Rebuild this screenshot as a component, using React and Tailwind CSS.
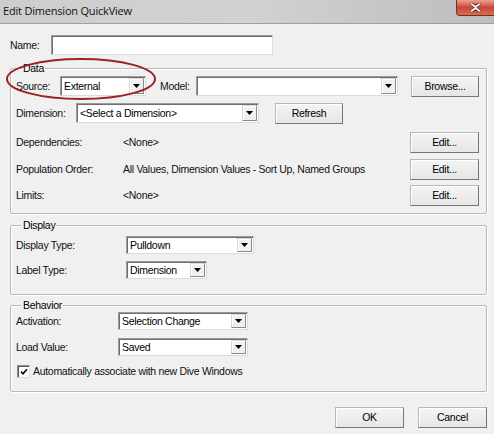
import React from "react";

const font = { fontFamily: '"Liberation Sans", Arial, sans-serif' };

function Btn({ w = "w-[68px]", h = "h-[21px]", children, className = "" }) {
  return (
    <div
      className={`${w} ${h} ${className} flex items-center justify-center shrink-0 bg-gradient-to-b from-[#f4f4f4] to-[#e6e6e6] border border-[#b8b8b8] border-b-[#767676] border-r-[#767676] shadow-[inset_1px_1px_0_#ffffff] text-black`}
    >
      {children}
    </div>
  );
}

function Arrow() {
  return (
    <div className="w-[15px] self-stretch my-[1px] mr-[1px] flex items-center justify-center bg-[#f0f0f0] border border-[#d8d8d8] border-b-[#8a8a8a] border-r-[#8a8a8a] shadow-[inset_1px_1px_0_#ffffff]">
      <svg width="7" height="4" viewBox="0 0 7 4">
        <path d="M0 0h7L3.5 4z" fill="#000" />
      </svg>
    </div>
  );
}

function Combo({ w, h = "h-[20px]", value = "" }) {
  return (
    <div
      className={`${w} ${h} shrink-0 flex items-stretch bg-white border border-[#9a9a9a] border-b-[#dcdcdc] border-r-[#dcdcdc] shadow-[inset_1px_1px_0_#6f6f6f]`}
    >
      <div className="flex-1 flex items-center pl-[3px] text-black truncate">
        {value}
      </div>
      <Arrow />
    </div>
  );
}

function Group({ title, className = "", children }) {
  return (
    <fieldset
      className={`${className} border border-[#b9b9b9] rounded-[2px] shadow-[inset_1px_1px_0_#ffffff,1px_1px_0_#ffffff] pl-[5px] pr-[7px]`}
    >
      <legend className="ml-[6px] px-[1px] leading-[13px] text-black">
        {title}
      </legend>
      {children}
    </fieldset>
  );
}

export default function App() {
  return (
    <div
      className="w-[494px] h-[434px] relative overflow-hidden bg-[#f0f0f0] flex flex-col text-[10.5px] tracking-[-0.3px] leading-[13px] text-[#111]"
      style={font}
    >
      {/* title bar */}
      <div className="h-[24px] shrink-0 flex items-center bg-gradient-to-r from-[#cdcdcd] via-[#d2d2d2] to-[#bdbdbd] border-b border-[#9f9f9f] relative">
        <span
          className="pl-[3px] pb-[2px] text-[11px] tracking-[-0.2px] text-[#111]"
          style={{ fontFamily: '"Open Sans", "Noto Sans", sans-serif' }}
        >
          Edit Dimension QuickView
        </span>
        <div className="absolute right-0 top-0 w-[38px] h-[16px] rounded-bl-[4px] bg-gradient-to-b from-[#e8a08e] via-[#c8463a] to-[#d0704e] border border-[#7a2a20] border-t-0 border-r-0 flex items-center justify-center">
          <svg width="11" height="9" viewBox="0 0 11 9">
            <path
              d="M1 0.5l4.5 3 4.5-3M1 8.5l4.5-3 4.5 3"
              stroke="#4a2020"
              strokeWidth="3.2"
              fill="none"
            />
            <path
              d="M1.2 0.8l4.3 3.2 4.3-3.2M1.2 8.2l4.3-3.2 4.3 3.2"
              stroke="#ffffff"
              strokeWidth="1.8"
              fill="none"
            />
          </svg>
        </div>
      </div>

      <div className="flex-1 flex flex-col pl-[10px] pr-[7px]">
        {/* name */}
        <div className="mt-[11px] flex items-center h-[20px]">
          <span className="w-[41px]">Name:</span>
          <div className="w-[222px] h-[20px] bg-white border border-[#9a9a9a] border-b-[#dcdcdc] border-r-[#dcdcdc] shadow-[inset_1px_1px_0_#6f6f6f]" />
        </div>

        {/* data */}
        <Group title="Data" className="mt-[7px] pb-[7px]">
          <div className="flex items-center h-[22px]">
            <span className="w-[44px]">Source:</span>
            <Combo w="w-[86px]" value="External" />
            <span className="w-[36px] ml-[14px]">Model:</span>
            <Combo w="w-[202px]" />
            <Btn className="ml-[13px]">Browse...</Btn>
          </div>
          <div className="flex items-center h-[22px] mt-[5px]">
            <span className="w-[60px]">Dimension:</span>
            <Combo w="w-[183px]" value="<Select a Dimension>" />
            <Btn className="ml-[16px]">Refresh</Btn>
          </div>
          <div className="flex items-center h-[22px] mt-[7px]">
            <span className="w-[107px]">Dependencies:</span>
            <span className="flex-1">&lt;None&gt;</span>
            <Btn w="w-[69px]">Edit...</Btn>
          </div>
          <div className="flex items-center h-[22px] mt-[5px]">
            <span className="w-[107px]">Population Order:</span>
            <span className="flex-1">
              All Values, Dimension Values - Sort Up, Named Groups
            </span>
            <Btn w="w-[69px]">Edit...</Btn>
          </div>
          <div className="flex items-center h-[22px] mt-[4px]">
            <span className="w-[107px]">Limits:</span>
            <span className="flex-1">&lt;None&gt;</span>
            <Btn w="w-[69px]">Edit...</Btn>
          </div>
        </Group>

        {/* display */}
        <Group title="Display" className="mt-[5px] pt-[4px] pb-[15px]">
          <div className="flex items-center h-[18px]">
            <span className="w-[110px]">Display Type:</span>
            <Combo w="w-[128px]" h="h-[18px]" value="Pulldown" />
          </div>
          <div className="flex items-center h-[18px] mt-[7px]">
            <span className="w-[110px]">Label Type:</span>
            <Combo w="w-[81px]" h="h-[18px]" value="Dimension" />
          </div>
        </Group>

        {/* behavior */}
        <Group title="Behavior" className="mt-[4px] pb-[13px]">
          <div className="flex items-center h-[18px]">
            <span className="w-[102px]">Activation:</span>
            <Combo w="w-[130px]" h="h-[18px]" value="Selection Change" />
          </div>
          <div className="flex items-center h-[18px] mt-[8px]">
            <span className="w-[102px]">Load Value:</span>
            <Combo w="w-[130px]" h="h-[18px]" value="Saved" />
          </div>
          <div className="flex items-center mt-[9px] h-[13px] pl-[1px]">
            <div className="w-[13px] h-[13px] bg-white border border-[#8f8f8f] border-b-[#dcdcdc] border-r-[#dcdcdc] shadow-[inset_1px_1px_0_#5a5a5a] flex items-center justify-center">
              <svg width="8" height="8" viewBox="0 0 8 8">
                <path d="M1 3.5l2 2.2L7 1.2" stroke="#000" strokeWidth="1.6" fill="none" />
              </svg>
            </div>
            <span className="ml-[3px]">Automatically associate with new Dive Windows</span>
          </div>
        </Group>

        {/* buttons */}
        <div className="mt-[15px] flex justify-end gap-[14px]">
          <Btn w="w-[69px]">OK</Btn>
          <Btn w="w-[69px]">Cancel</Btn>
        </div>
      </div>

      {/* red annotation ellipse */}
      <svg
        className="absolute left-0 top-0 pointer-events-none"
        width="494"
        height="434"
        viewBox="0 0 494 434"
      >
        <ellipse cx="81" cy="79" rx="74" ry="20" fill="none" stroke="#9c2222" strokeWidth="2" />
      </svg>
    </div>
  );
}
